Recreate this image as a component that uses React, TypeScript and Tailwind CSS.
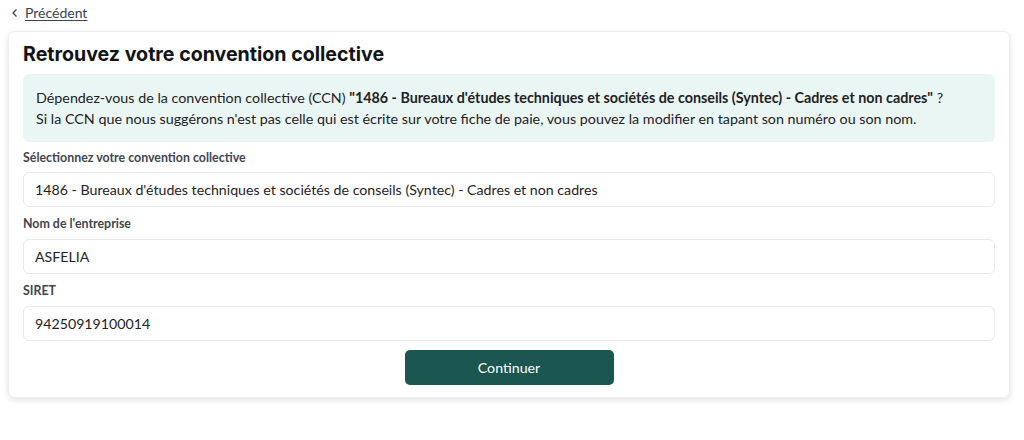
import React from "react";

const font = { fontFamily: "Lato, 'Noto Sans', sans-serif" };

function Field({ label, value, first }: { label: string; value: string; first?: boolean }) {
  return (
    <div className="flex flex-col">
      <label
        className={`text-[12.4px] font-bold text-[#3f4650] leading-[16px] ${
          first ? "mt-[8px] mb-[6px]" : "mt-[9px] mb-[7px]"
        }`}
      >
        {label}
      </label>
      <div className="h-[35px] rounded-[6px] border border-[#e8eaed] bg-white px-[11px] flex items-center text-[14.2px] text-[#1f2226]">
        {value}
      </div>
    </div>
  );
}

export default function App() {
  return (
    <div className="w-[1024px] h-[440px] bg-white" style={font}>
      <div className="px-[11px] pt-[4px] h-[31px] flex items-start">
        <a className="flex items-center gap-[6px] text-[14px] text-[#3b4450] leading-[18px]">
          <svg width="8" height="10" viewBox="0 0 8 10" fill="none">
            <path d="M5.5 1.5 L2 5 L5.5 8.5" stroke="#3b4450" strokeWidth="1.3" />
          </svg>
          <span className="underline underline-offset-2">Précédent</span>
        </a>
      </div>

      <div className="mx-[8px] w-[1002px] rounded-[7px] border border-[#eceef0] shadow-[0_2px_6px_rgba(0,0,0,0.12)] px-[14px] pt-[9px] pb-[12px]">
        <h1
          className="text-[19.6px] font-bold text-[#111316] leading-[26px] mb-[7px]"
          style={{ fontFamily: "Inter, sans-serif" }}
        >
          Retrouvez votre convention collective
        </h1>

        <div className="rounded-[6px] bg-[#eaf6f4] px-[13px] py-[13px] text-[14.3px] leading-[21px] text-[#1f2226]">
          <p>
            Dépendez-vous de la convention collective (CCN){" "}
            <strong className="font-bold">
              "1486 - Bureaux d'études techniques et sociétés de conseils (Syntec) - Cadres et non cadres"
            </strong>{" "}
            ?
          </p>
          <p>
            Si la CCN que nous suggérons n'est pas celle qui est écrite sur votre fiche de paie, vous pouvez la modifier en tapant son numéro ou son nom.
          </p>
        </div>

        <Field
          first
          label="Sélectionnez votre convention collective"
          value="1486 - Bureaux d'études techniques et sociétés de conseils (Syntec) - Cadres et non cadres"
        />
        <Field label="Nom de l'entreprise" value="ASFELIA" />
        <Field label="SIRET" value="94250919100014" />

        <div className="flex justify-center mt-[9px]">
          <button className="w-[209px] h-[35px] rounded-[5px] bg-[#1b5650] text-white text-[14.2px]">
            Continuer
          </button>
        </div>
      </div>
    </div>
  );
}
